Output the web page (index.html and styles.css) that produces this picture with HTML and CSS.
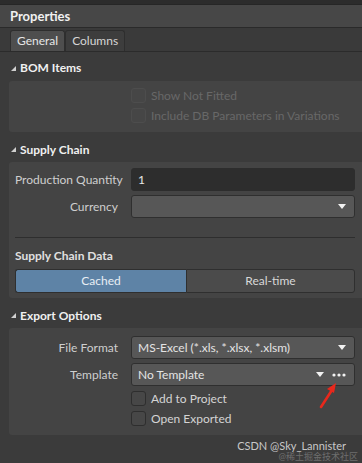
FILE: index.html
```html
<!DOCTYPE html>
<html lang="en">
<head>
    <meta charset="UTF-8">
    <title>Properties</title>
    <link rel="stylesheet" href="styles.css">
</head>
<body>
    <div class="topbar"></div>
    <div class="header">Properties</div>
    <div class="tabs">
        <div class="tab active">General</div>
        <div class="tab">Columns</div>
    </div>

    <div class="content">
        <!-- BOM Items -->
        <div class="section-title first"><span class="caret"></span>BOM Items</div>
        <div class="panel bom">
            <div class="check-row disabled"><span class="box"></span>Show Not Fitted</div>
            <div class="check-row disabled"><span class="box"></span>Include DB Parameters in Variations</div>
        </div>

        <!-- Supply Chain -->
        <div class="section-title"><span class="caret"></span>Supply Chain</div>
        <div class="panel supply">
            <div class="row">
                <label>Production Quantity</label>
                <div class="field input">1</div>
            </div>
            <div class="row">
                <label>Currency</label>
                <div class="field select"><span class="value"></span><span class="arrow"></span></div>
            </div>
            <div class="divider"></div>
            <div class="sub-title">Supply Chain Data</div>
            <div class="segmented">
                <div class="seg on">Cached</div>
                <div class="seg">Real-time</div>
            </div>
        </div>

        <!-- Export Options -->
        <div class="section-title"><span class="caret"></span>Export Options</div>
        <div class="panel export">
            <div class="row">
                <label>File Format</label>
                <div class="field select"><span class="value">MS-Excel (*.xls, *.xlsx, *.xlsm)</span><span class="arrow"></span></div>
            </div>
            <div class="row last">
                <label>Template</label>
                <div class="field select">
                    <span class="value">No Template</span><span class="arrow"></span>
                    <svg class="dots" width="14" height="4" viewBox="0 0 14 4">
                        <circle cx="2" cy="2" r="1.6" fill="#f2f2f2"/>
                        <circle cx="7" cy="2" r="1.6" fill="#f2f2f2"/>
                        <circle cx="12" cy="2" r="1.6" fill="#f2f2f2"/>
                    </svg>
                </div>
            </div>
            <div class="check-row"><span class="box"></span>Add to Project</div>
            <div class="check-row"><span class="box"></span>Open Exported</div>
        </div>

        <div class="watermark">
            <div class="wm-main">CSDN @Sky_Lannister</div>
            <div class="wm-sub">@稀土掘金技术社区</div>
        </div>

        <svg class="pointer" width="24" height="28" viewBox="0 0 24 28">
            <path d="M3 26 L14 9" stroke="#e8281c" stroke-width="2.6" stroke-linecap="round"/>
            <path d="M18 2 L9 8 L16 12 Z" fill="#e8281c"/>
        </svg>
    </div>
</body>
</html>
```

FILE: styles.css
```css
body {
    margin: 0;
    width: 362px;
    height: 463px;
    overflow: hidden;
    background-color: #3b3b3b;
    font-family: Lato, "Noto Sans CJK SC", sans-serif;
    font-size: 12px;
    color: #cdcdcd;
    white-space: nowrap;
}
.topbar {
    height: 4px;
    background-color: #2c2c2c;
}
.header {
    height: 22px;
    line-height: 22px;
    padding-left: 10px;
    background-color: #474747;
    border-top: 1px solid #262626;
    border-bottom: 1px solid #2a2a2a;
    font-weight: bold;
    font-size: 13px;
    color: #f0f0f0;
}
.tabs {
    display: flex;
    height: 23px;
    padding: 0 0 0 10px;
    background-color: #3a3a3a;
    border-bottom: 1px solid #2b2b2b;
    align-items: flex-end;
}
.tab {
    height: 20px;
    line-height: 20px;
    padding: 0 6px;
    border: 1px solid #2e2e2e;
    border-bottom: none;
    border-radius: 3px 3px 0 0;
    background-color: #3d3d3d;
    color: #d6d6d6;
}
.tab.active {
    background-color: #4e4e4e;
    color: #e6e6e6;
}
.content {
    position: relative;
    padding: 0 0 0 9px;
}
.section-title {
    display: flex;
    align-items: center;
    height: 26px;
    padding-top: 4px;
    font-weight: bold;
    color: #f0f0f0;
}
.section-title.first {
    height: 27px;
    padding-top: 2px;
}
.caret {
    width: 0;
    height: 0;
    border-left: 5px solid transparent;
    border-bottom: 5px solid #d0d0d0;
    margin: 1px 4px 0 2px;
}
.panel {
    background-color: #444444;
    border-radius: 3px 0 0 3px;
    padding: 6px 7px 6px 6px;
}
.bom {
    padding: 4px 7px 7px 6px;
}
.check-row {
    display: flex;
    align-items: center;
    height: 20px;
    padding-left: 116px;
    color: #d4d4d4;
}
.check-row.disabled {
    color: #686868;
}
.box {
    width: 13px;
    height: 13px;
    border: 1px solid #2e2e2e;
    border-radius: 3px;
    background-color: #474747;
    margin-right: 5px;
}
.disabled .box {
    border-color: #4d4d4d;
    background-color: #464646;
}
.row {
    display: flex;
    align-items: center;
    margin-bottom: 4px;
}
.row.last {
    margin-bottom: 2px;
}
.row label {
    width: 103px;
    text-align: right;
    margin-right: 13px;
    color: #cfcfcf;
}
.field {
    flex: 1;
    height: 21px;
    border-radius: 3px;
    padding: 0 8px 0 6px;
    display: flex;
    align-items: center;
}
.input {
    background-color: #2d2d2d;
    border: 1px solid #2d2d2d;
    color: #e8e8e8;
}
.select {
    background-color: #575757;
    border: 1px solid #2f2f2f;
    color: #e4e4e4;
}
.value {
    flex: 1;
}
.arrow {
    width: 0;
    height: 0;
    border-left: 4px solid transparent;
    border-right: 4px solid transparent;
    border-top: 5px solid #f2f2f2;
}
.dots {
    margin-left: 8px;
}
.supply {
    padding: 6px 7px 5px 6px;
}
.divider {
    height: 1px;
    background-color: #2e2e2e;
    margin-top: 19px;
}
.sub-title {
    height: 31px;
    line-height: 36px;
    font-weight: bold;
    color: #e0e0e0;
}
.segmented {
    display: flex;
    height: 24px;
}
.seg {
    flex: 1;
    text-align: center;
    line-height: 22px;
    border: 1px solid #2f2f2f;
    background-color: #4b4b4b;
    color: #d8d8d8;
    border-radius: 0 3px 3px 0;
}
.seg.on {
    flex: 0 0 170px;
    background-color: #5e83a6;
    color: #e8eef4;
    border-radius: 3px 0 0 3px;
    border-right: none;
}
.export {
    padding: 8px 7px 7px 6px;
}
.watermark {
    text-align: right;
    padding: 5px 16px 0 0;
}
.wm-main {
    font-size: 11px;
    line-height: 12px;
    color: #c8c8c8;
}
.wm-sub {
    font-size: 9px;
    line-height: 10px;
    color: #6e6e6e;
    margin-right: -12px;
}
.pointer {
    position: absolute;
    left: 318px;
    top: 329px;
}
```
